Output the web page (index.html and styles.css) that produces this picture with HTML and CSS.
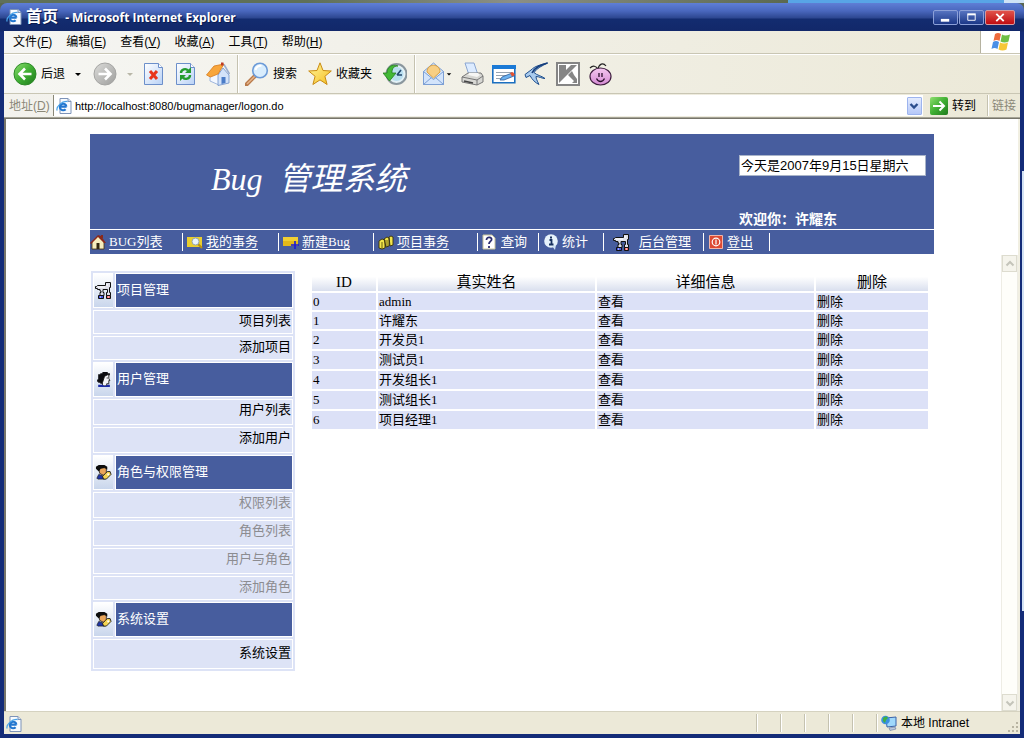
FILE: index.html
```html
<!DOCTYPE html>
<html lang="zh-CN">
<head>
<meta charset="utf-8">
<title>首页</title>
<link rel="stylesheet" href="styles.css">
</head>
<body>
<svg class="defs" aria-hidden="true">
  <defs>
    <linearGradient id="gGreen" x1="0" y1="0" x2="1" y2="1"><stop offset="0" stop-color="#8fe070"/><stop offset=".5" stop-color="#3fae33"/><stop offset="1" stop-color="#1f7a1d"/></linearGradient>
    <linearGradient id="gGrey" x1="0" y1="0" x2="1" y2="1"><stop offset="0" stop-color="#dcdcda"/><stop offset="1" stop-color="#9e9e9c"/></linearGradient>
    <linearGradient id="gPage" x1="0" y1="0" x2="1" y2="1"><stop offset="0" stop-color="#ffffff"/><stop offset="1" stop-color="#b9d2f6"/></linearGradient>
    <linearGradient id="gStar" x1="0" y1="0" x2="1" y2="1"><stop offset="0" stop-color="#fff7a0"/><stop offset="1" stop-color="#f5bd1e"/></linearGradient>
    <linearGradient id="gPig" x1="0" y1="0" x2="0" y2="1"><stop offset="0" stop-color="#f3c6ef"/><stop offset="1" stop-color="#d58bd3"/></linearGradient>
  </defs>
  <symbol id="ie" viewBox="0 0 16 16">
    <path d="M4 .5h8l3 3v12H4z" fill="#f8fbff" stroke="#7d93b8"/>
    <path d="M12 .5v3h3" fill="#d5e2f5" stroke="#7d93b8"/>
    <path d="M10.6 8.6H4.2M10.4 8.6a3.3 3.3 0 1 0-.8 2.6" fill="none" stroke="#2276cf" stroke-width="2.1"/>
    <path d="M1.200 12.600C-.4 9 6 2.600 11.600 3.600" fill="none" stroke="#4aa3e8" stroke-width="1.200"/>
  </symbol>
  <symbol id="dog" viewBox="0 0 17 17">
    <path d="M.5 4.500h1l1-1h8v-3h5v5h-1v5h1v3h-4v-3h1v-3H8v3h1v3H5v-3h1V9H5V7.500H2.500v-1h-2z" fill="#dfe0ea" stroke="#111"/>
    <path d="M3 5h7M12 2v2" stroke="#fff"/>
    <path d="M3.500 13.500h5v3h-5z" fill="#4453e0" stroke="#111"/><path d="M11.500 13.500h4v3h-4z" fill="#f0686b" stroke="#111"/>
    <path d="M5 15h1M13 15h1" stroke="#fff"/>
  </symbol>
  <symbol id="woman" viewBox="0 0 16 16">
    <path d="M3 3h2V2h2V1h5v1h2v2h-3l-2 3-1 5H5v-1H3v-1H2V8h1z" fill="#0c0c10"/>
    <path d="M9 5l3-1.500h1V7l1 2h-1v3h-2v2H7v-3z" fill="#f4f4f8" stroke="#111" stroke-width=".8"/>
    <path d="M11 6h1v1h-1z" fill="#0c0c10"/>
    <path d="M3 13h4l2 1 3-1h2v2H3z" fill="#1c2ba6"/>
  </symbol>
  <symbol id="keyuser" viewBox="0 0 18 18">
    <path d="M4 4h8v6l-3 2-4-2z" fill="#e9a55a" stroke="#111" stroke-width=".8"/>
    <path d="M1 3l3-2h6l3 2v3L10 4 6 5 4 8 1 5z" fill="#0d0d0d"/>
    <path d="M2 15l2-4 5 2 1 3H3z" fill="#2036a8" stroke="#111" stroke-width=".7"/>
    <path d="M8 13l3-3 2-2h3l1 3-3 3-2 2-3 0z" fill="#f4d552" stroke="#111" stroke-width=".9"/>
    <path d="M13 10h2v2h-2z" fill="#fff"/>
  </symbol>
</svg>

<div class="desktop"></div>
<div class="window">
  <header class="titlebar">
    <svg class="i16"><use href="#ie"/></svg>
    <h1 class="title"><span class="title-cn">首页</span> - Microsoft Internet Explorer</h1>
    <div class="winbtns">
      <button class="winbtn" aria-label="最小化"><svg viewBox="0 0 24 14"><path d="M7 10h9" stroke="#fff" stroke-width="3"/></svg></button>
      <button class="winbtn" aria-label="最大化"><svg viewBox="0 0 24 14"><path d="M8 4h8v6H8z" fill="none" stroke="#fff"/><path d="M7.500 3.500h9" stroke="#fff" stroke-width="2"/></svg></button>
      <button class="winbtn close" aria-label="关闭"><svg viewBox="0 0 30 14"><path d="M11 3l8 8M19 3l-8 8" stroke="#fff" stroke-width="2"/></svg></button>
    </div>
  </header>

  <nav class="menubar">
    <button>文件(<u>F</u>)</button><button>编辑(<u>E</u>)</button><button>查看(<u>V</u>)</button><button>收藏(<u>A</u>)</button><button>工具(<u>T</u>)</button><button>帮助(<u>H</u>)</button>
    <div class="throbber">
      <svg viewBox="0 0 20 18"><path d="M4 1q3-2 6 0L8.500 8q-3-2-6 0z" fill="#ee6a3c"/><path d="M11 1.500q3 2 8 0L17.500 8.500q-4 2-8 0z" fill="#6fbf44"/><path d="M2 9q3-2 6 0L6.500 16q-3-2-6 0z" fill="#4a8fe6"/><path d="M9 9.500q4 2 8 0L15.500 16.500q-4 2-8 0z" fill="#f6c737"/></svg>
    </div>
  </nav>

  <div class="toolbar">
    <button class="tool labelled"><svg viewBox="0 0 24 24"><circle cx="12" cy="12" r="11" fill="url(#gGreen)" stroke="#2d8a28"/><path d="M18.500 12H7M12 6.500L6.500 12l5.500 5.500" fill="none" stroke="#fff" stroke-width="2.600"/></svg>后退<svg class="caret" viewBox="0 0 8 8"><path d="M1 3h6L4 6z" fill="#000"/></svg></button>
    <button class="tool" aria-label="前进"><svg viewBox="0 0 24 24"><circle cx="12" cy="12" r="11" fill="url(#gGrey)" stroke="#a5a5a3"/><path d="M5.500 12H17M12 6.500l5.500 5.500-5.500 5.500" fill="none" stroke="#fff" stroke-width="2.600"/></svg><svg class="caret" viewBox="0 0 8 8"><path d="M1 3h6L4 6z" fill="#b9b7a8"/></svg></button>
    <button class="tool" aria-label="停止"><svg viewBox="0 0 24 24"><path d="M2.500 1.500h14l4 4v17h-18z" fill="url(#gPage)" stroke="#6c8fca"/><path d="M16.500 1.500v4h4" fill="#fff" stroke="#6c8fca"/><path d="M8 9l7 8M15 9l-7 8" stroke="#e8351c" stroke-width="3"/></svg></button>
    <button class="tool" aria-label="刷新"><svg viewBox="0 0 24 24"><path d="M2.500 1.500h14l4 4v17h-18z" fill="url(#gPage)" stroke="#6c8fca"/><path d="M16.500 1.500v4h4" fill="#fff" stroke="#6c8fca"/><path d="M7 11c0-4 5-5 7-2.500M16 13c0 4-5 5-7 2.500" fill="none" stroke="#229b2f" stroke-width="2.400"/><path d="M17 5v6h-6zM6 19v-6h6z" fill="#229b2f"/></svg></button>
    <button class="tool" aria-label="主页"><svg viewBox="0 0 24 24"><path d="M4 12l7-3 2 4v10l-9-4z" fill="#f4f8ff" stroke="#8aa6d6" stroke-width=".8"/><path d="M12 13l5-7 6 7v8l-11 2.500z" fill="#d3e3fa" stroke="#6d8fc8" stroke-width=".8"/><path d="M.5 13L8 4l10-2-6 10-7.500 3z" fill="#f8a63c" stroke="#d57a1c" stroke-width=".8"/><path d="M18 2.500l5.500 9.500" stroke="#9aaed0" stroke-width="1.600"/><path d="M15 .5h2.500v3H15z" fill="#bf3a24"/><path d="M15.500 15h4v6l-4 1z" fill="#4b7cc7"/></svg></button>
    <span class="sep"></span>
    <button class="tool labelled"><svg viewBox="0 0 24 24"><path d="M10 14L1.500 22.500" stroke="#b97a4a" stroke-width="4" stroke-linecap="round"/><path d="M10 14l-8 8" stroke="#e8b58a" stroke-width="1.500"/><circle cx="15" cy="8.500" r="7.300" fill="#d9edfd" stroke="#6c9bd8" stroke-width="1.600"/><path d="M10.500 8a5 5 0 0 1 6-4.200" fill="none" stroke="#fff" stroke-width="2"/></svg>搜索</button>
    <button class="tool labelled"><svg viewBox="0 0 24 24"><path d="M12 .8l3 7.700 8.300.5-6.400 5.300 2.200 8.200-7.100-4.600-7.100 4.600 2.200-8.200L.7 9 9 8.500z" fill="url(#gStar)" stroke="#c98b12"/></svg>收藏夹</button>
    <button class="tool" aria-label="历史"><svg viewBox="0 0 24 24"><circle cx="13.500" cy="12" r="10" fill="#e3f1f6" stroke="#8b979e" stroke-width="2"/><circle cx="13.500" cy="12" r="7" fill="#b9dff0"/><path d="M14 13l4-5M14 13h5" stroke="#23486e" stroke-width="1.600"/><path d="M0 11h4C4 5 9 1.500 15 4c-5 0-6 3-6 7h4l-6.500 8z" fill="#43b836" stroke="#237f1d" stroke-width=".8"/></svg></button>
    <span class="sep"></span>
    <button class="tool mail" aria-label="邮件"><svg viewBox="0 0 24 24"><path d="M1.500 9.500L11.500 1l10 8.500v13h-20z" fill="#d7e7fb" stroke="#7c9fd4"/><path d="M5 10c0-9 13-9 13 0l-6.500 6z" fill="#f8cf84" stroke="#d9a145"/><path d="M1.500 9.500l10 8 10-8v13h-20z" fill="#d3e4fb" stroke="#7c9fd4"/><path d="M1.500 22.500l8-7M21.500 22.500l-8-7" stroke="#7c9fd4"/></svg><svg class="caret" viewBox="0 0 8 8"><path d="M1 3h6L4 6z" fill="#000"/></svg></button>
    <button class="tool" aria-label="打印"><svg viewBox="0 0 24 24"><path d="M5 1h9l4 12H9z" fill="#dcebff" stroke="#8aa6d2"/><path d="M2 15l6-4h13l2 3v6l-6 3-15-3z" fill="#d7d7d3" stroke="#777"/><path d="M2 15l15 3 6-4M17 18v5" fill="none" stroke="#777"/><path d="M4 19l9 2" stroke="#444" stroke-width="1.600"/><path d="M9 11h9l2 2-3 2-9-2z" fill="#f6f6f4"/></svg></button>
    <button class="tool" aria-label="编辑"><svg viewBox="0 0 24 24"><path d="M.8 3.800h22v17H.8z" fill="#fff" stroke="#1b6fc0" stroke-width="1.600"/><path d="M0 3h24v4H0z" fill="#1b7ad6"/><path d="M4 10.500h16M4 13.500h12M4 16.500h6" stroke="#98a4b0"/><path d="M8 18l2-3 10-4 2 3-10 4z" fill="#6cb2f0" stroke="#2d5e9c" stroke-width=".8"/><path d="M18 11l3-1 2 3-3 1.500z" fill="#e8522f"/></svg></button>
    <button class="tool" aria-label="迅雷"><svg viewBox="0 0 24 24"><path d="M23.500 1C16 3 11 4 7 8L1 12.500l1 3 4-2c2 4 5 7 9 9-2-4-3-6-3-8 3 0 6 2 9 2-4-3-8-3-11-6C13 6 18 4 23.500 1z" fill="#a9cbee" stroke="#1f4f8e"/><path d="M23.500 1C17 3 11 5 8 11" stroke="#173e7c" stroke-width="1.600" fill="none"/></svg></button>
    <button class="tool" aria-label="卡巴斯基"><svg viewBox="0 0 24 24"><path d="M1 1h22v22H1z" fill="#fff" stroke="#858585" stroke-width="2"/><path d="M3 3h7v5l5-5h6L3 21z" fill="#858585"/><path d="M12 13l4-4 2 4 3 4v4h-5l2-2z" fill="#858585"/></svg></button>
    <button class="tool" aria-label="猪"><svg viewBox="0 0 24 24"><path d="M2 6c3-3 6-2 8 1 1-5 5-7 8-3" fill="none" stroke="#222" stroke-width="1.200"/><ellipse cx="12.500" cy="14.500" rx="10.500" ry="8.500" fill="url(#gPig)" stroke="#3d1c3e" stroke-width="1.200"/><path d="M11 11v4M14 11v4M8.500 16.500c2 4 6 4 8 0" fill="none" stroke="#2a102b" stroke-width="1.300"/></svg></button>
  </div>

  <form class="address">
    <label for="url">地址(<u>D</u>)</label>
    <div class="urlbox">
      <svg class="i16"><use href="#ie"/></svg>
      <input id="url" type="text" value="http://localhost:8080/bugmanager/logon.do">
      <button class="drop" type="button" aria-label="展开"><svg viewBox="0 0 10 10"><path d="M1.500 3L5 6.500 8.500 3" fill="none" stroke="#2b4d8c" stroke-width="2.400"/></svg></button>
    </div>
    <button class="go" type="button"><svg viewBox="0 0 18 18"><rect width="18" height="18" rx="2" fill="url(#gGreen)"/><path d="M3 9h11M9.500 4.500L14 9l-4.500 4.500" fill="none" stroke="#fff" stroke-width="2"/></svg>转到</button>
    <button class="links" type="button">链接</button>
  </form>

  <main class="viewport">
    <section class="topframe">
      <div class="banner">
        <div class="banner-main">
          <h2>Bug&nbsp; 管理系统</h2>
          <div class="info">
            <input type="text" aria-label="日期" value="今天是2007年9月15日星期六">
            <p>欢迎你：许耀东</p>
          </div>
        </div>
        <nav class="nav">
          <a href="#bugs"><svg viewBox="0 0 16 16"><path d="M2 8l6-6 6 6v7H2z" fill="#f6edbd" stroke="#4a3008" stroke-width=".8"/><path d="M0 9l8-8 3 1 5 7-2 0-6-6-7 7z" fill="#8a2a1c"/><path d="M11 1h2v3h-2z" fill="#8a2a1c"/><path d="M6.500 9h3v6h-3z" fill="#32260f"/></svg><span>BUG列表</span></a>
          <a href="#mine"><svg viewBox="0 0 16 16"><path d="M0 3h15v10H0z" fill="#e9ce2e"/><path d="M10 9l5 5" stroke="#b78f10" stroke-width="2"/><circle cx="8.500" cy="7.500" r="3.500" fill="#e8f3fb" stroke="#96a4a8"/></svg><span>我的事务</span></a>
          <a href="#new"><svg viewBox="0 0 16 16"><path d="M0 3h15v9H0z" fill="#f0cf33"/><path d="M0 7h15v5H0z" fill="#e2b81a"/><path d="M12 7v8M8 11h8" stroke="#1a1ad8" stroke-width="1.600"/></svg><span>新建Bug</span></a>
          <a href="#project"><svg viewBox="0 0 16 16"><path d="M1 7l3-2 3 1v8l-3 1-3-1zM6 5l3-2 2 1v8l-3 1zM11 3l2-1 2 1v8l-3 1z" fill="#f0e44c" stroke="#35300a" stroke-width=".9"/><path d="M4 8v7M9 6v6" stroke="#6b6210"/></svg><span>项目事务</span></a>
          <a href="#query"><svg viewBox="0 0 16 16"><path d="M1 1h9l3 3v11H1z" fill="#fff" stroke="#c8c49a"/><path d="M4.500 6c0-4 6-3 5 0-.5 1.500-2.500 1.500-2.500 4M7 12v2" fill="none" stroke="#2a2c6e" stroke-width="1.800"/></svg><span><u>查</u>询</span></a>
          <a href="#stats"><svg viewBox="0 0 16 16"><circle cx="8" cy="7" r="6.800" fill="#e6f2fb"/><path d="M9 12l3 4 1-5z" fill="#cfe2f2"/><path d="M6.500 6h2v4.500M6 10.500h4.500M7 3.500h2" fill="none" stroke="#17315f" stroke-width="1.800"/></svg><span>统计</span></a>
          <a href="#admin"><svg><use href="#dog"/></svg><span>后台管理</span></a>
          <a href="#logout"><svg viewBox="0 0 16 16"><path d="M1.500 1.500h13v13h-13z" fill="#dd4a33" stroke="#f3b4a6"/><circle cx="8" cy="8" r="3.800" fill="none" stroke="#fff" stroke-width="1.200"/><path d="M8 5.500v5" stroke="#fff" stroke-width="1.200"/></svg><span>登出</span></a>
        </nav>
      </div>
    </section>

    <section class="mainframe">
      <div class="scrollarea">
        <div class="content">
          <aside class="side">
            <div class="head"><span class="ico"><svg><use href="#dog"/></svg></span><h3>项目管理</h3></div>
            <a class="tight" href="#p1">项目列表</a>
            <a class="tight" href="#p2">添加项目</a>
            <div class="head"><span class="ico"><svg><use href="#woman"/></svg></span><h3>用户管理</h3></div>
            <a href="#u1">用户列表</a>
            <a href="#u2">添加用户</a>
            <div class="head"><span class="ico"><svg><use href="#keyuser"/></svg></span><h3>角色与权限管理</h3></div>
            <a class="off" href="#r1">权限列表</a>
            <a class="off" href="#r2">角色列表</a>
            <a class="off" href="#r3">用户与角色</a>
            <a class="off tight" href="#r4">添加角色</a>
            <div class="head"><span class="ico"><svg><use href="#keyuser"/></svg></span><h3>系统设置</h3></div>
            <a class="tall" href="#s1">系统设置</a>
          </aside>
          <table class="users">
            <colgroup><col class="c-id"><col class="c-name"><col class="c-info"><col class="c-del"></colgroup>
            <thead><tr><th>ID</th><th>真实姓名</th><th>详细信息</th><th>删除</th></tr></thead>
            <tbody>
              <tr><td>0</td><td>admin</td><td><a href="#v0">查看</a></td><td><a href="#d0">删除</a></td></tr>
              <tr><td>1</td><td>许耀东</td><td><a href="#v1">查看</a></td><td><a href="#d1">删除</a></td></tr>
              <tr><td>2</td><td>开发员1</td><td><a href="#v2">查看</a></td><td><a href="#d2">删除</a></td></tr>
              <tr><td>3</td><td>测试员1</td><td><a href="#v3">查看</a></td><td><a href="#d3">删除</a></td></tr>
              <tr><td>4</td><td>开发组长1</td><td><a href="#v4">查看</a></td><td><a href="#d4">删除</a></td></tr>
              <tr><td>5</td><td>测试组长1</td><td><a href="#v5">查看</a></td><td><a href="#d5">删除</a></td></tr>
              <tr><td>6</td><td>项目经理1</td><td><a href="#v6">查看</a></td><td><a href="#d6">删除</a></td></tr>
            </tbody>
          </table>
        </div>
      </div>
      <div class="scrollbar">
        <button aria-label="向上"><svg viewBox="0 0 10 10"><path d="M1.500 6.500L5 3l3.500 3.500" fill="none" stroke="#c4c4ba" stroke-width="2"/></svg></button>
        <button aria-label="向下"><svg viewBox="0 0 10 10"><path d="M1.500 3.500L5 7l3.500-3.500" fill="none" stroke="#c4c4ba" stroke-width="2"/></svg></button>
      </div>
    </section>
  </main>

  <footer class="status">
    <div class="status-main"><svg class="i16"><use href="#ie"/></svg></div>
    <span class="cell"></span><span class="cell"></span><span class="cell"></span><span class="cell"></span><span class="cell"></span>
    <div class="zone"><svg class="i16" viewBox="0 0 16 16"><path d="M5 3l10-1v9l-9 1z" fill="#9fd8fb" stroke="#3b63a8"/><path d="M8 13l6-1 1 2-6 1.500z" fill="#bcc9dd" stroke="#64779a" stroke-width=".6"/><circle cx="4.500" cy="5" r="4.300" fill="#3c8fe0"/><path d="M2 3c2-2 4-2 5 0L5 5 4 8 2 6z" fill="#41b13f"/></svg>本地 Intranet</div>
    <svg class="grip" viewBox="0 0 12 12"><path d="M9 1h2v2H9zM9 5h2v2H9zM5 5h2v2H5zM9 9h2v2H9zM5 9h2v2H5zM1 9h2v2H1z" fill="#b8b4a2"/></svg>
  </footer>
</div>
</body>
</html>
```
FILE: styles.css
```css
* { box-sizing: border-box; }
body {
  margin: 0;
  min-height: 100vh;
  display: flex;
  flex-direction: column;
  background: #5a6650;
  color: #000;
  font: 12px/16px "Liberation Sans", "Noto Sans CJK SC", sans-serif;
}
svg { display: block; flex: none; }
h1, h2, h3, p { margin: 0; font-weight: normal; }
button { border: 0; padding: 0; background: none; color: inherit; font: inherit; display: flex; align-items: center; }
a { color: inherit; text-decoration: none; }
.defs { position: absolute; width: 0; height: 0; }
.i16 { width: 16px; height: 16px; }

.desktop { height: 3px; background: linear-gradient(90deg, #5f7058 0 30%, #8b8f86 50%, #5b6950 77%, #58a5e6 77% 98%, #cfe3f6 98%); }
.window {
  flex: 1;
  display: flex;
  flex-direction: column;
  padding: 0 4px 4px;
  border-radius: 7px 7px 0 0;
  background:
    linear-gradient(#d3e2f4, #d3e2f4) right 0 top 168px / 2px 440px no-repeat,
    linear-gradient(#5f7fd6 0, #4967bd 8px, #2c468f 15px, #132c70 16px, #12286a 28px, #142c78 29px);
}

.titlebar { display: flex; align-items: center; gap: 4px; height: 28px; padding: 0 5px 0 2px; color: #fff; }
.title { flex: 1; font: bold 12px/20px "Open Sans", "Noto Sans CJK SC", sans-serif; white-space: pre; text-shadow: 1px 1px #0a1a50; }
.title-cn { font-size: 16px; margin-right: 4px; }
.winbtns { display: flex; gap: 1px; }
.winbtn { width: 25px; height: 15px; border: 1px solid #8ca0d8; border-radius: 2px; background: linear-gradient(#5673c0, #1c3888); }
.winbtn svg { width: 100%; height: 100%; }
.winbtn.close { width: 30px; background: linear-gradient(#e0534b, #c00d12); border-color: #d59a9f; }

.menubar { display: flex; align-items: stretch; height: 23px; padding-left: 2px; background: linear-gradient(90deg, #f5f5f3, #ece9d8); border-bottom: 1px solid #c9c6b4; }
.menubar button { padding: 0 7px; }
.throbber { margin-left: auto; width: 40px; display: grid; place-items: center; background: #fff; border-left: 1px solid #b5b2a0; }
.throbber svg { width: 20px; height: 18px; }

.toolbar { display: flex; align-items: center; gap: 8px; height: 40px; padding: 0 9px; background: linear-gradient(90deg, #f6f6f3, #ece9d8); border-bottom: 1px solid #c9c6b4; border-top: 1px solid #fff; }
.tool { gap: 4px; }
.tool svg { width: 24px; height: 24px; }
.tool .caret { width: 8px; height: 8px; margin-left: 5px; }
.tool.labelled { gap: 4px; margin-right: 3px; }
.tool.mail { gap: 0; }
.tool.mail .caret { width: 6px; margin: 0; }
.sep { width: 1px; margin: 0 -1px; align-self: stretch; background: #c5c2b0; box-shadow: 1px 0 #fff; }

.address { display: flex; align-items: stretch; height: 25px; padding: 1px 2px 2px 5px; background: linear-gradient(90deg, #f3f2ed, #ece9d8); border-bottom: 1px solid #77756a; box-shadow: inset 0 -1px #a5a395; }
.address label { display: flex; align-items: center; width: 44px; color: #8b8878; }
.urlbox { flex: 1; display: flex; align-items: center; gap: 3px; padding: 0 1px 0 2px; background: #fff; border-left: 1px solid #8a8878; }
.urlbox input { flex: 1; min-width: 0; border: 0; padding: 0; outline: 0; background: none; font: inherit; font-size: 11px; }
.drop { width: 15px; height: 18px; justify-content: center; border: 1px solid #9db4ee; border-radius: 1px; background: linear-gradient(#e3ebfe, #b6c8f8); }
.drop svg { width: 10px; height: 10px; }
.go { gap: 4px; padding: 0 11px 0 7px; }
.go svg { width: 18px; height: 18px; }
.links { padding-left: 4px; color: #8b8878; border-left: 1px solid #c5c2b0; box-shadow: inset 1px 0 #fff; width: 31px; }

.viewport { flex: 1; display: flex; flex-direction: column; border-left: 2px solid #77756a; border-right: 2px solid #f1efe2; background: #fff; }
.topframe { padding: 15px 0 1px; }
.banner { max-width: 844px; margin: 0 auto; background: #475d9e; color: #fff; font: 13px/16px "Liberation Serif", "Noto Sans CJK SC", serif; }
.banner-main { display: flex; justify-content: space-between; height: 95px; padding: 0 8px 0 121px; }
.banner h2 { padding-top: 24px; font-size: 32px; line-height: 42px; font-style: italic; }
.info { display: flex; flex-direction: column; justify-content: space-between; width: 187px; padding-top: 21px; }
.info input { width: 100%; height: 21px; border: 1px solid #a9b4c9; padding: 0 1px 2px; font: 13px/16px "Liberation Sans", "Noto Sans CJK SC", sans-serif; }
.info p { font-size: 14px; line-height: 18px; font-weight: bold; }
.nav { display: grid; grid-template-columns: 93fr 96fr 95fr 104fr 61fr 65fr 100fr 66fr 164fr; height: 25px; padding: 3px 0; border-top: 1px solid #fff; }
.nav a { display: flex; align-items: center; gap: 3px; padding-left: 4px; border-right: 1px solid #fff; white-space: nowrap; }
.nav a:first-child { padding-left: 0; }
.nav a:nth-child(7) { padding-left: 9px; gap: 9px; }
.nav a:nth-child(7) svg { width: 17px; height: 17px; }
.nav svg { width: 16px; height: 16px; }
.nav span { line-height: 15px; border-bottom: 1px solid #fff; }
.nav a:nth-child(5) span, .nav a:nth-child(6) span { border-bottom-color: transparent; }

.mainframe { flex: 1; display: flex; font: 13px/16px "Liberation Serif", "Noto Sans CJK SC", serif; }
.scrollarea { flex: 1; min-width: 0; padding: 16px 0 16px 17px; }
.content { display: flex; align-items: flex-start; gap: 15px; max-width: 844px; margin: 0 auto; padding: 0 4px 0 1px; }
.side { width: 204px; flex: none; display: flex; flex-direction: column; gap: 2px; padding: 2px; background: #dde3f6; }
.head { display: flex; gap: 2px; height: 35px; }
.ico { width: 20px; display: grid; place-items: center; border: solid #fff; border-width: 1px 0 1px 1px; background: linear-gradient(#fff, #c9d6ec); }
.ico svg { width: 17px; height: 17px; }
.head h3 { flex: 1; padding: 0 1px 2px; font-size: 13px; line-height: 31px; color: #fff; background: #475d9e; border: 1px solid #fff; }
.side a { height: 26px; padding: 0 1px; line-height: 20px; text-align: right; border: 1px solid #fff; }
.side a.tight { height: 24px; line-height: 19px; }
.side a.tall { height: 30px; line-height: 25px; }
.side a.off { color: #8c8c90; }

.users { flex: 1; min-width: 0; table-layout: fixed; border-collapse: separate; border-spacing: 2px; }
.c-id { width: 64px; }
.c-name, .c-info { width: 217px; }
.users th, .users td { height: 18px; padding: 0 1px; line-height: 16px; }
.users th { font-size: 15px; font-weight: normal; background: linear-gradient(#fff 20%, #d9dfee); }
.users td { background: #dce1f7; }
.users tr:nth-child(-n+2) td { height: 17px; }

.scrollbar { width: 17px; display: flex; flex-direction: column; justify-content: space-between; background: #fefefa; border: solid #eeede5; border-width: 0 1px; }
.scrollbar button { height: 17px; justify-content: center; background: #f5f4ec; border: 1px solid #dddccf; }
.scrollbar svg { width: 10px; height: 10px; }

.status { display: flex; align-items: stretch; height: 23px; background: #ece9d8; border-top: 1px solid #d5d2c0; }
.status-main { flex: 1; display: flex; align-items: center; padding: 2px 2px 0; }
.cell, .zone { margin: 2px 0; border-left: 1px solid #c5c2b0; box-shadow: inset 1px 0 #fff; }
.cell { width: 24px; }
.zone { display: flex; align-items: center; gap: 4px; width: 131px; padding-left: 4px; }
.grip { width: 12px; height: 12px; align-self: flex-end; margin: 0 1px 1px 0; }
```
